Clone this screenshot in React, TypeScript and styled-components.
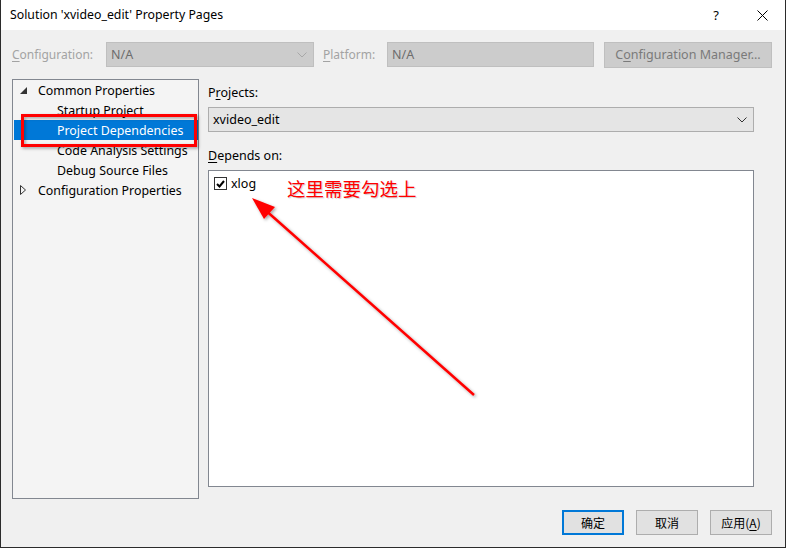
import React from "react";
import styled, { createGlobalStyle } from "styled-components";

const GlobalStyle = createGlobalStyle`
  html, body {
    margin: 0;
    padding: 0;
    background: #ffffff;
  }
  body {
    font-family: "Noto Sans", "Noto Sans CJK SC", sans-serif;
    font-size: 12px;
    color: #000000;
  }
`;

const Window = styled.div`
  position: relative;
  width: 786px;
  height: 548px;
  box-sizing: border-box;
  border: 1px solid #2b2b2b;
  border-top: none;
  background: #f0f0f0;
  display: flex;
  flex-direction: column;
  overflow: hidden;
`;

const TitleBar = styled.div`
  height: 30px;
  background: #ffffff;
  display: flex;
  align-items: center;
  padding-left: 9px;
  flex-shrink: 0;
`;

const Title = styled.div`
  flex: 1;
  font-size: 12.3px;
  margin-top: -1px;
`;

const TitleButton = styled.div`
  width: 46px;
  height: 30px;
  display: flex;
  align-items: center;
  justify-content: center;
  font-size: 13px;
  color: #000;
`;

const Body = styled.div`
  flex: 1;
  display: flex;
  flex-direction: column;
  padding: 12px 13px 0 11px;
`;

const ConfigRow = styled.div`
  display: flex;
  align-items: center;
  height: 25px;
`;

const DisabledLabel = styled.span<{ $width: number }>`
  color: #a3a3a3;
  width: ${(p) => p.$width}px;
  flex-shrink: 0;
`;

const U = styled.span`
  text-decoration: underline;
  text-underline-offset: 2px;
`;

const Combo = styled.div<{ $width: number; $disabled?: boolean }>`
  width: ${(p) => p.$width}px;
  height: 25px;
  box-sizing: border-box;
  border: 1px solid ${(p) => (p.$disabled ? "#bfbfbf" : "#adadad")};
  background: ${(p) => (p.$disabled ? "#cccccc" : "#e5e5e5")};
  color: ${(p) => (p.$disabled ? "#6d6d6d" : "#000")};
  display: flex;
  align-items: center;
  padding: 0 6px 0 4px;
  flex-shrink: 0;
`;

const ComboText = styled.span`
  flex: 1;
  font-size: 12.5px;
`;

const Chevron = ({ color }: { color: string }) => (
  <svg width="10" height="6" viewBox="0 0 10 6">
    <polyline points="0.5,0.5 5,5 9.5,0.5" fill="none" stroke={color} strokeWidth="1" />
  </svg>
);

const DisabledButton = styled.div`
  margin-left: auto;
  width: 168px;
  height: 26px;
  box-sizing: border-box;
  border: 1px solid #bfbfbf;
  background: #cccccc;
  color: #7a7a7a;
  font-size: 12.5px;
  display: flex;
  align-items: center;
  justify-content: center;
`;

const Main = styled.div`
  display: grid;
  grid-template-columns: 187px 546px;
  column-gap: 9px;
  margin-top: 12px;
`;

const Tree = styled.div`
  height: 420px;
  box-sizing: border-box;
  border: 1px solid #828790;
  background: #f4f4f4;
  padding-left: 1px;
`;

const TreeRow = styled.div<{ $level: number; $selected?: boolean }>`
  height: 20px;
  display: flex;
  align-items: center;
  padding-left: ${(p) => (p.$level === 0 ? 6 : 43)}px;
  background: ${(p) => (p.$selected ? "#0078d7" : "transparent")};
  color: ${(p) => (p.$selected ? "#ffffff" : "#000000")};
  font-size: 12.4px;
  white-space: nowrap;
`;

const Toggle = styled.span`
  width: 18px;
  display: inline-flex;
  align-items: center;
`;

const Right = styled.div`
  display: flex;
  flex-direction: column;
`;

const FieldLabel = styled.div<{ $top: number }>`
  margin-top: ${(p) => p.$top}px;
  line-height: 16px;
  font-size: 12.5px;
`;

const ListBox = styled.div`
  margin-top: 6px;
  height: 317px;
  box-sizing: border-box;
  border: 1px solid #828790;
  background: #ffffff;
  padding: 4px 5px;
`;

const CheckRow = styled.div`
  display: flex;
  align-items: center;
  gap: 4px;
  font-size: 12.5px;
`;

const CheckBox = styled.span`
  width: 11px;
  height: 11px;
  border: 1px solid #333333;
  background: #ffffff;
  display: inline-flex;
  align-items: center;
  justify-content: center;
`;

const Footer = styled.div`
  display: flex;
  justify-content: flex-end;
  gap: 12px;
  margin-top: 11px;
`;

const DialogButton = styled.div<{ $default?: boolean }>`
  width: 62px;
  height: 25px;
  box-sizing: border-box;
  border: ${(p) => (p.$default ? "2px solid #0078d7" : "1px solid #adadad")};
  background: #e1e1e1;
  display: flex;
  align-items: center;
  justify-content: center;
  font-family: "Noto Sans CJK SC", sans-serif;
  font-size: 12px;
`;

const Annotation = styled.svg`
  position: absolute;
  left: 0;
  top: 0;
  pointer-events: none;
  overflow: visible;
`;

const Note = styled.div`
  position: absolute;
  left: 286px;
  top: 176px;
  color: #ff0000;
  font-family: "Noto Sans CJK SC", sans-serif;
  font-size: 18.5px;
  line-height: 24px;
  text-shadow: 1px 1px 1px rgba(0, 0, 0, 0.18);
`;

export default function App() {
  return (
    <>
      <GlobalStyle />
      <Window>
        <TitleBar>
          <Title>Solution 'xvideo_edit' Property Pages</Title>
          <TitleButton>?</TitleButton>
          <TitleButton>
            <svg width="11" height="11" viewBox="0 0 11 11">
              <path d="M0.5 0.5 L10.5 10.5 M10.5 0.5 L0.5 10.5" stroke="#000" strokeWidth="1" />
            </svg>
          </TitleButton>
        </TitleBar>
        <Body>
          <ConfigRow>
            <DisabledLabel $width={94}>
              <U>C</U>onfiguration:
            </DisabledLabel>
            <Combo $width={208} $disabled>
              <ComboText>N/A</ComboText>
              <Chevron color="#a8a8a8" />
            </Combo>
            <DisabledLabel $width={64} style={{ marginLeft: 9 }}>
              <U>P</U>latform:
            </DisabledLabel>
            <Combo $width={207} $disabled>
              <ComboText>N/A</ComboText>
            </Combo>
            <DisabledButton>
              C<U>o</U>nfiguration Manager...
            </DisabledButton>
          </ConfigRow>
          <Main>
            <Tree>
              <TreeRow $level={0}>
                <Toggle>
                  <svg width="7" height="7" viewBox="0 0 7 7">
                    <polygon points="7,0 7,7 0,7" fill="#333" />
                  </svg>
                </Toggle>
                Common Properties
              </TreeRow>
              <TreeRow $level={1}>Startup Project</TreeRow>
              <TreeRow $level={1} $selected>
                Project Dependencies
              </TreeRow>
              <TreeRow $level={1}>Code Analysis Settings</TreeRow>
              <TreeRow $level={1}>Debug Source Files</TreeRow>
              <TreeRow $level={0}>
                <Toggle>
                  <svg width="6" height="10" viewBox="0 0 6 10">
                    <polygon points="0.5,0.5 5.5,5 0.5,9.5" fill="none" stroke="#333" strokeWidth="1" />
                  </svg>
                </Toggle>
                Configuration Properties
              </TreeRow>
            </Tree>
            <Right>
              <FieldLabel $top={6}>
                P<U>r</U>ojects:
              </FieldLabel>
              <Combo $width={546} style={{ marginTop: 6 }}>
                <ComboText>xvideo_edit</ComboText>
                <Chevron color="#333" />
              </Combo>
              <FieldLabel $top={16}>
                <U>D</U>epends on:
              </FieldLabel>
              <ListBox>
                <CheckRow>
                  <CheckBox>
                    <svg width="9" height="8" viewBox="0 0 9 8">
                      <polyline points="1,4 3.5,6.5 8,1" fill="none" stroke="#000" strokeWidth="2" />
                    </svg>
                  </CheckBox>
                  xlog
                </CheckRow>
              </ListBox>
            </Right>
          </Main>
          <Footer>
            <DialogButton $default>确定</DialogButton>
            <DialogButton>取消</DialogButton>
            <DialogButton>应用(<U>A</U>)</DialogButton>
          </Footer>
        </Body>
        <Annotation width="786" height="548" viewBox="0 0 786 548">
          <defs>
            <filter id="sh" x="-20%" y="-20%" width="140%" height="140%">
              <feDropShadow dx="1.5" dy="1.5" stdDeviation="1.5" floodColor="#000" floodOpacity="0.35" />
            </filter>
          </defs>
          <rect x="21.5" y="115.5" width="173" height="30" fill="none" stroke="#ff0000" strokeWidth="3" filter="url(#sh)" />
          <g filter="url(#sh)">
            <line x1="473" y1="395" x2="262" y2="208" stroke="#ff0000" strokeWidth="2.5" />
            <polygon points="251,198 274,207 263,219" fill="#ff0000" />
          </g>
        </Annotation>
        <Note>这里需要勾选上</Note>
      </Window>
    </>
  );
}
